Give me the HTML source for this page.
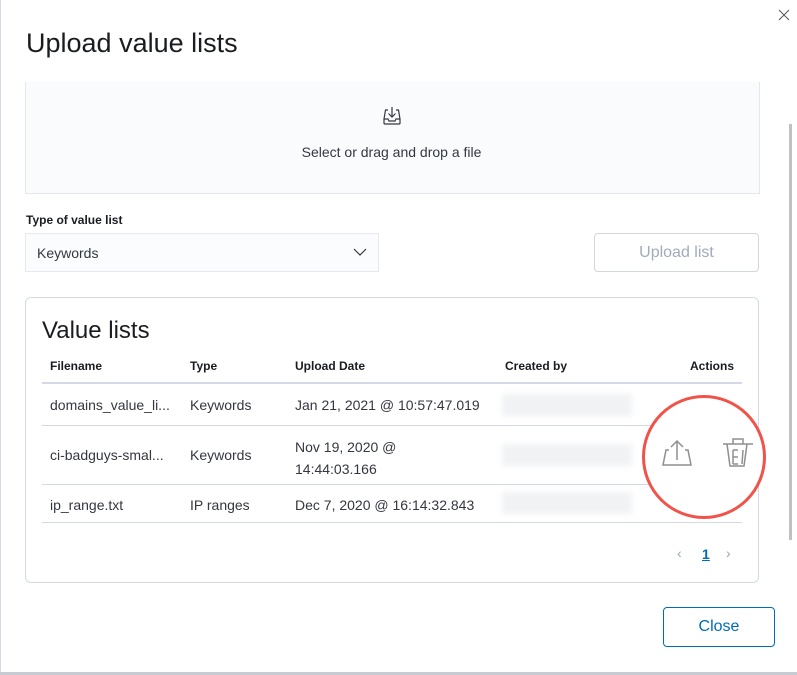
<!DOCTYPE html>
<html><head><style>
body{margin:0;width:797px;height:675px;background:#fff;font-family:"Liberation Sans",sans-serif;position:relative;overflow:hidden;color:#343741}
.a{position:absolute}
.t{font-size:14px}
</style></head><body>
<div class="a" style="left:0;top:0;width:797px;height:672px;border-bottom:3px solid #c8cbd2"></div>
<div class="a" style="left:0;top:0;width:1px;height:672px;background:#d3dae6"></div>
<svg class="a" style="left:778px;top:9px" width="12" height="12"><path d="M1 1l10 10M11 1L1 11" stroke="#555" stroke-width="1"/></svg>
<div class="a" style="left:26px;top:28px;font-size:27px;color:#1a1c21">Upload value lists</div>
<div class="a" style="left:789px;top:124px;width:3px;height:416px;background:#bfc1c6"></div>
<div class="a" style="left:25px;top:82px;width:733px;height:111px;background:#fafbfd;border:1px solid #e3e7ee;border-top:none"></div>
<svg class="a" style="left:380px;top:104px" width="24" height="24" viewBox="0 0 24 24" fill="none" stroke="#343741" stroke-width="1.2"><path d="M8 6H5.5L4 15v4a1 1 0 0 0 1 1h14a1 1 0 0 0 1-1v-4l-1.5-9H16"/><path d="M12 3v10M8.5 9.5L12 13l3.5-3.5"/><path d="M4 15h4l1 2h6l1-2h4"/></svg>
<div class="a t" style="left:0;width:783px;top:144px;text-align:center;color:#343741">Select or drag and drop a file</div>
<div class="a" style="left:26px;top:213px;font-size:12px;font-weight:bold;color:#1a1c21">Type of value list</div>
<div class="a" style="left:25px;top:233px;width:354px;height:39px;background:#fbfcfd;border:1px solid #e6e9ef;box-sizing:border-box"></div>
<div class="a t" style="left:37px;top:245px">Keywords</div>
<svg class="a" style="left:353px;top:247px" width="14" height="10"><path d="M1 2l6 6 6-6" stroke="#343741" fill="none" stroke-width="1.2"/></svg>
<div class="a" style="left:594px;top:233px;width:165px;height:39px;border:1px solid #d3d6dc;border-radius:4px;box-sizing:border-box;text-align:center;line-height:37px;font-size:16px;color:#a2abba">Upload list</div>
<div class="a" style="left:25px;top:297px;width:734px;height:286px;border:1px solid #d3dae6;border-radius:6px;box-sizing:border-box"></div>
<div class="a" style="left:42px;top:317px;font-size:24px;color:#1a1c21">Value lists</div>
<div class="a" style="left:50px;top:359px;font-size:12px;font-weight:bold;color:#1a1c21">Filename</div>
<div class="a" style="left:190px;top:359px;font-size:12px;font-weight:bold;color:#1a1c21">Type</div>
<div class="a" style="left:295px;top:359px;font-size:12px;font-weight:bold;color:#1a1c21">Upload Date</div>
<div class="a" style="left:505px;top:359px;font-size:12px;font-weight:bold;color:#1a1c21">Created by</div>
<div class="a" style="left:690px;top:359px;font-size:12px;font-weight:bold;color:#1a1c21">Actions</div>
<div class="a" style="left:42px;top:382px;width:700px;height:2px;background:#d3dae6"></div>
<div class="a" style="left:42px;top:425px;width:700px;height:1px;background:#d3dae6"></div>
<div class="a" style="left:42px;top:484px;width:700px;height:1px;background:#d3dae6"></div>
<div class="a" style="left:42px;top:522px;width:700px;height:1px;background:#d3dae6"></div>
<div class="a t" style="left:50px;top:397px">domains_value_li...</div>
<div class="a t" style="left:190px;top:397px">Keywords</div>
<div class="a t" style="left:295px;top:397px">Jan 21, 2021 @ 10:57:47.019</div>
<div class="a t" style="left:50px;top:447px">ci-badguys-smal...</div>
<div class="a t" style="left:190px;top:447px">Keywords</div>
<div class="a t" style="left:295px;top:436px;line-height:22px">Nov 19, 2020 @<br>14:44:03.166</div>
<div class="a t" style="left:50px;top:497px">ip_range.txt</div>
<div class="a t" style="left:190px;top:497px">IP ranges</div>
<div class="a t" style="left:295px;top:497px">Dec 7, 2020 @ 16:14:32.843</div>
<div class="a" style="left:502px;top:394px;width:130px;height:22px;background:#f1f2f4;filter:blur(3px)"></div>
<div class="a" style="left:502px;top:444px;width:130px;height:22px;background:#f1f2f4;filter:blur(3px)"></div>
<div class="a" style="left:502px;top:492px;width:130px;height:22px;background:#f1f2f4;filter:blur(3px)"></div>
<div class="a" style="left:642px;top:395px;width:124px;height:124px;border:3px solid #f0534a;border-radius:50%;box-sizing:border-box;background:#fff"></div>
<svg class="a" style="left:660px;top:438px" width="34" height="32" fill="none" stroke="#8f8f8f" stroke-width="1.5"><path d="M9 12H6L3 27h28l-3-15h-3"/><path d="M17 22V3M11 9l6-6 6 6"/></svg>
<svg class="a" style="left:721px;top:436px" width="34" height="34" fill="none" stroke="#8f8f8f" stroke-width="1.5"><path d="M2 8h30M12 8V3h10v5M6 8l3 22h14l3-22M12 14h5M12 14v14M12 21h5M12 28h5M22 14l-1 14"/></svg>
<div class="a" style="left:677px;top:545px;font-size:14px;color:#98a2b3">‹</div>
<div class="a" style="left:702px;top:546px;font-size:14px;font-weight:bold;color:#006bb8;text-decoration:underline">1</div>
<div class="a" style="left:726px;top:545px;font-size:14px;color:#98a2b3">›</div>
<div class="a" style="left:663px;top:607px;width:112px;height:40px;border:1px solid #006bb8;border-radius:4px;box-sizing:border-box;text-align:center;line-height:38px;font-size:16px;color:#006bb8">Close</div>
</body></html>
